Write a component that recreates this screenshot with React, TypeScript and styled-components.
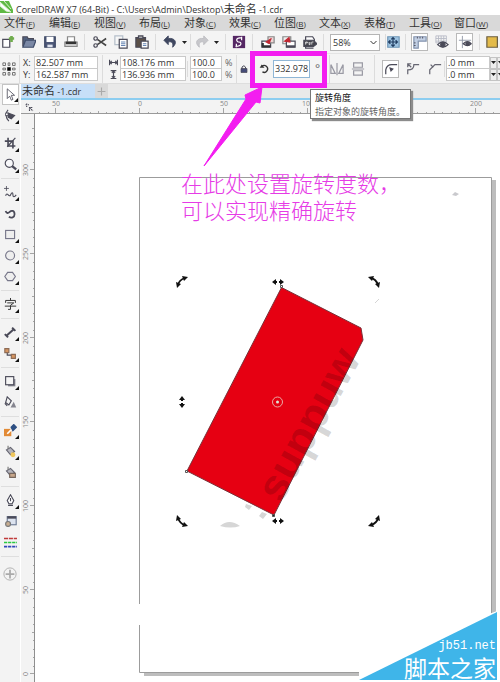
import React from "react";
import styled, { createGlobalStyle } from "styled-components";

const UI = '"Open Sans", "Noto Sans", "Noto Sans CJK SC", sans-serif';
const INK = "#4a4a58";
const MAGENTA = "#f31df0";

const GlobalStyle = createGlobalStyle`
  * { box-sizing: border-box; }
  body { margin: 0; background: #fff; font-family: ${UI}; color: #333; overflow: hidden; }
  button, input, select { font-family: inherit; color: inherit; margin: 0; padding: 0; border: 0; background: none; border-radius: 0; }
  svg { display: block; flex: none; }
`;

const Shell = styled.div`
  position: relative;
  display: flex;
  flex-direction: column;
  min-height: 100vh;
`;
const TitleBar = styled.header`
  display: flex;
  align-items: center;
  gap: 3px;
  height: 15px;
  font-size: 9px;
  white-space: nowrap;
  background: #fff;
`;
const Han = styled.span`
  font-size: 11px;
`;
const MenuBar = styled.nav`
  display: flex;
  height: 16px;
  padding-left: 4px;
  background: #d9d9d9;
`;
const MenuItem = styled.button`
  flex: none;
  width: 45px;
  text-align: left;
  font-size: 11px;
  line-height: 15px;
  white-space: nowrap;
`;
const Accel = styled.span`
  font-size: 8px;
`;
const ToolBar = styled.div`
  display: flex;
  align-items: center;
  height: 22px;
  padding-left: 1px;
  background: #f4f4f4;
  overflow: hidden;
`;
const Group = styled.div<{ $gap?: number }>`
  display: flex;
  align-items: center;
  flex: none;
  gap: ${(p) => p.$gap ?? 7}px;
`;
const Divider = styled.span<{ $before?: number; $after?: number; $tall?: boolean }>`
  flex: none;
  width: 1px;
  height: ${(p) => (p.$tall ? 28 : 16)}px;
  margin: 0 ${(p) => p.$after ?? 6}px 0 ${(p) => p.$before ?? 6}px;
  background: #dcdcdc;
`;
const IconButton = styled.button<{ $w?: number; $boxed?: boolean }>`
  display: flex;
  align-items: center;
  justify-content: center;
  flex: none;
  width: ${(p) => p.$w ?? 14}px;
  height: 18px;
  ${(p) => p.$boxed && "background: #fff; border: 1px solid #b9b9b9;"}
`;
const ZoomBox = styled.div`
  display: flex;
  position: relative;
  width: 64px;
  height: 17px;
`;
const ZoomSelect = styled.select`
  appearance: none;
  width: 100%;
  padding-left: 2px;
  border: 1px solid #b5b5b5;
  background: #fff;
  font-size: 9px;
`;
const Chevron = styled.svg`
  position: absolute;
  right: 3px;
  top: 6px;
  pointer-events: none;
`;
const PropertyBar = styled.div`
  display: flex;
  align-items: center;
  height: 31px;
  padding-left: 2px;
  background: #f4f4f4;
  border-top: 1px solid #e4e4e4;
  border-bottom: 1px solid #dedede;
  overflow: hidden;
`;
const FieldStack = styled.div<{ $w: number }>`
  display: flex;
  flex-direction: column;
  flex: none;
  width: ${(p) => p.$w}px;
`;
const FieldRow = styled.label`
  display: flex;
  align-items: center;
  height: 12px;
  font-size: 9px;
`;
const FieldName = styled.span`
  display: flex;
  flex: none;
  width: 11px;
`;
const Field = styled.input`
  flex: 1;
  min-width: 0;
  width: 100%;
  height: 13px;
  padding: 0 1px;
  border: 1px solid #c9c9c9;
  background: #fff;
  font-size: 9px;
  line-height: 11px;
`;
const Unit = styled.span`
  flex: none;
  width: 12px;
  padding-left: 3px;
  color: #666;
`;
const Spin = styled.button`
  display: flex;
  align-items: center;
  justify-content: center;
  width: 7px;
  height: 12px;
  border: 1px solid #c4c4c4;
  background: #eee;
`;
const AngleGroup = styled.div`
  display: flex;
  align-items: center;
  position: relative;
  z-index: 2;
  flex: none;
  width: 78px;
  height: 29px;
  padding-left: 8px;
  gap: 3px;
`;
const AngleField = styled(Field)`
  flex: none;
  width: 37px;
  height: 18px;
  border-color: #8fb6d6;
`;
const Degree = styled.span`
  padding-left: 2px;
  font-size: 12px;
  color: #666;
`;
const Workspace = styled.div`
  display: flex;
  flex: 1;
`;
const ToolBox = styled.aside`
  display: flex;
  flex-direction: column;
  align-items: center;
  flex: none;
  width: 20px;
  background: #f3f3f3;
`;
const Tool = styled.button<{ $active?: boolean; $tall?: boolean }>`
  display: flex;
  position: relative;
  align-items: center;
  justify-content: center;
  flex: none;
  width: 17px;
  height: ${(p) => (p.$tall ? 28 : 21)}px;
  ${(p) => p.$active && "background: #fff; border: 1px solid #c4c4c4;"}
`;
const Flyout = styled.span`
  position: absolute;
  right: 0;
  bottom: 2px;
  border-left: 4px solid transparent;
  border-bottom: 4px solid #111;
`;
const ToolDivider = styled.span`
  flex: none;
  width: 18px;
  height: 1px;
  margin: 3px 0;
  background: #dedede;
`;
const Document = styled.main`
  display: flex;
  flex-direction: column;
  flex: 1;
  min-width: 0;
  border-left: 1px solid #fff;
`;
const Tabs = styled.div`
  display: flex;
  height: 16px;
  background: #e9e9e9;
  border-bottom: 2px solid #8ccdf0;
`;
const Tab = styled.button`
  width: 74px;
  padding-left: 1px;
  text-align: left;
  font-size: 9px;
  line-height: 14px;
  white-space: nowrap;
  background: #c7dff8;
`;
const AddTab = styled.button`
  display: flex;
  align-items: center;
  justify-content: center;
  width: 13px;
  background: #d9d9d9;
`;
const TopRuler = styled.div`
  display: flex;
  height: 14px;
  background: #f3f3f3;
  border-bottom: 1px solid #9a9a9a;
  overflow: hidden;
`;
const Corner = styled.div`
  flex: none;
  width: 14px;
  padding: 3px 0 0 4px;
`;
const HScale = styled.div`
  display: flex;
  margin-left: -21px;
`;
const HSegment = styled.div`
  display: flex;
  flex-direction: column;
  align-items: center;
  justify-content: space-between;
  flex: none;
  width: 84px;
  font-size: 7px;
  line-height: 8px;
  color: #888;
`;
const RulerClip = styled.div`
  flex: 1;
  min-width: 0;
  overflow: hidden;
`;
const Body = styled.div`
  display: flex;
  flex: 1;
`;
const LeftRuler = styled.div`
  flex: none;
  width: 14px;
  background: #f3f3f3;
  border-right: 1px solid #8f8f8f;
  overflow: hidden;
  height: calc(100vh - 114px);
`;
const VScale = styled.div`
  display: flex;
  flex-direction: column;
  margin-top: 14px;
`;
const VSegment = styled.div`
  display: flex;
  align-items: center;
  justify-content: space-between;
  flex: none;
  height: 84px;
  padding-left: 1px;
  font-size: 7px;
  line-height: 8px;
  color: #888;
`;
const VLabel = styled.span`
  writing-mode: vertical-rl;
  transform: rotate(180deg);
`;
const Canvas = styled.section`
  position: relative;
  flex: 1;
  min-width: 0;
  overflow: hidden;
  background: #fff;
`;
const Artwork = styled.svg`
  position: absolute;
  left: 0;
  top: 0;
`;
const Note = styled.p`
  position: absolute;
  left: 146px;
  top: 55px;
  margin: 0;
  font: 300 22px/27px "Noto Sans CJK SC", sans-serif;
  color: #e63be6;
  white-space: nowrap;
`;
const Brand = styled.div`
  position: absolute;
  right: 4px;
  bottom: 0;
  text-align: right;
  color: #fff;
  font: 23px/30px "Noto Sans CJK SC", sans-serif;
  white-space: nowrap;
`;
const BrandUrl = styled.div`
  font: 12px/12px "Liberation Mono", monospace;
`;
const Callout = styled.svg`
  position: absolute;
  left: 200px;
  top: 51px;
  z-index: 3;
  pointer-events: none;
`;
const Tooltip = styled.div`
  position: absolute;
  z-index: 4;
  left: 310px;
  top: 89px;
  width: 101px;
  height: 30px;
  padding: 1px 4px;
  border: 1px solid #777;
  background: #fff;
  box-shadow: 2px 2px 1px #8c8c8c;
  font-size: 9px;
  line-height: 14px;
  white-space: nowrap;
  color: #666;
`;
const TipTitle = styled.strong`
  display: block;
  font-weight: 400;
  color: #111;
`;

type IconProps = { children: React.ReactNode; size?: number; stroke?: string };
const Icon = ({ children, size = 14, stroke = INK }: IconProps) => (
  <svg width={size} height={size} viewBox="0 0 16 16" fill="none" stroke={stroke} strokeWidth="1.4" aria-hidden="true">
    {children}
  </svg>
);
const Caret = () => (
  <svg width="5" height="3" viewBox="0 0 5 3" aria-hidden="true"><path d="M0 0h5L2.500 3z" fill="#222" /></svg>
);

const menus: [string, string][] = [
  ["文件", "F"], ["编辑", "E"], ["视图", "V"], ["布局", "L"], ["对象", "C"], ["效果", "C"],
  ["位图", "B"], ["文本", "X"], ["表格", "T"], ["工具", "O"], ["窗口", "W"],
];

const bucket = (
  <>
    <path d="M3 6l5-3 5 5-5 4z" fill="#b5b5bd" stroke="#666672" />
    <path d="M5 5V1" stroke="#777" />
  </>
);

type ToolSpec = { name: string; art: React.ReactNode; fly?: boolean };
const toolGroups: ToolSpec[][] = [
  [
    { name: "选择", fly: true, art: <path d="M4 1v12l3-3 2 5 2-1-2-5h4z" fill="#fff" strokeWidth="1" /> },
    { name: "形状", fly: true, art: <><path d="M5 1C1 5 2 11 6 15" /><path d="M5 5l8 3-4 4-4-2z" fill={INK} /><rect x="2" y="5" width="3" height="3" fill="#fff" strokeWidth="1" /></> },
  ],
  [
    { name: "裁剪", fly: true, art: <><path d="M5 1v10h9M1 5h10v9" strokeWidth="2" /><path d="M14 1L4 12" /></> },
    { name: "缩放", fly: true, art: <><circle cx="6.500" cy="6.500" r="5" fill="#f8f8fa" /><path d="M10 10l5 4" strokeWidth="3" /></> },
  ],
  [
    { name: "手绘", fly: true, art: <><path d="M3 0v6M0 3h6" strokeWidth="1" /><path d="M2 12c2-6 4 3 6-1s3-3 3 0 2 3 4 0" /></> },
    { name: "艺术笔", art: <path d="M2 5c1 3 3 3 5 1s6-2 6 3c0 4-4 5-7 3" strokeWidth="2.200" /> },
    { name: "矩形", fly: true, art: <rect x="2" y="3" width="11" height="10" fill="#eee" stroke="#77778a" /> },
    { name: "椭圆", fly: true, art: <circle cx="7.500" cy="8" r="5.500" fill="#eee" stroke="#77778a" /> },
    { name: "多边形", fly: true, art: <path d="M4.500 3h6l3.500 5-3.500 5h-6L1 8z" fill="#eee" stroke="#77778a" /> },
  ],
  [{ name: "文本", fly: true, art: <path d="M8 0v3M2 6V3h12v3M4 6h8l-4 3v5H5M1 10h14" stroke="#333" strokeWidth="1.200" /> }],
  [
    { name: "平行度量", fly: true, art: <><path d="M3 12L12 4" strokeWidth="2.500" /><path d="M1 10l4 4M10 2l4 4" strokeWidth="2.500" /></> },
    { name: "连接器", fly: true, art: <><path d="M4 4v6h7" /><path d="M1 2h5v5H1zM9 9h5v5H9z" fill="#d59561" stroke="#8d6b55" /></> },
  ],
  [
    { name: "阴影", fly: true, art: <><path d="M5 5h9v9H5z" fill="#888892" stroke="none" /><rect x="2" y="2" width="10" height="10" fill="#f5f5f5" /></> },
    { name: "透明度", art: <><path d="M4 1l5 5-3 5-4-3zM1 9l3 3" /><path d="M8 14l4-7 3 7z" fill="#85858f" stroke="none" /></> },
  ],
  [
    { name: "颜色滴管", fly: true, art: <><path d="M0 6h9v9H0z" fill="#e28b37" stroke="none" /><path d="M4 12l6-6" stroke="#fff" strokeWidth="2" /><path d="M9 4l3-3 3 3-4 4z" fill="#2d4f83" stroke="#2d4f83" strokeWidth="2" /></> },
    { name: "交互式填充", fly: true, art: <>{bucket}<circle cx="11" cy="12" r="3" fill="#f0c75c" stroke="none" /></> },
    { name: "智能填充", art: <>{bucket}<path d="M7 9h7v5H7z" fill="#c7a68a" stroke="#77675d" /></> },
  ],
  [
    { name: "轮廓笔", fly: true, art: <><path d="M8 1l4 7-2 4H6L4 8zM8 5v4M5 14h6" fill="#fff" /></> },
    { name: "编辑填充", art: <><rect x="4" y="2" width="11" height="10" fill="#dce3ef" stroke="#6d7a94" /><path d="M4 3h11" strokeWidth="3" /><circle cx="5" cy="11" r="3" fill="#c8ae91" stroke="#777" /></> },
    { name: "颜色样式", art: <><path d="M0 3h16" stroke="#c03a3a" strokeWidth="2" strokeDasharray="5 1" /><path d="M0 8h16" stroke="#29c840" strokeWidth="2" strokeDasharray="4 1" /><path d="M0 13h16" stroke="#3146b8" strokeWidth="2" strokeDasharray="4 1" /></> },
  ],
];

const widthMarks = ["50", "0", "50", "100", "150", "200"];
const heightMarks = ["300", "250", "200", "150", "100", "50", "0"];

const HTicks = () => (
  <svg width="84" height="5" viewBox="0 0 84 5" stroke="#a5a5a5" aria-hidden="true">
    {[0, 8, 17, 25, 34, 50, 59, 67, 76].map((x) => <path key={x} d={`M${x + 0.5} ${x ? 4 : 3}v2`} />)}
    <path d="M41.500 0v5" />
  </svg>
);
const VTicks = () => (
  <svg width="5" height="84" viewBox="0 0 5 84" stroke="#a5a5a5" aria-hidden="true">
    {[0, 8, 17, 25, 34, 50, 59, 67, 76].map((y) => <path key={y} d={`M${y ? 3 : 2} ${y + 0.5}h3`} />)}
    <path d="M0 41.500h5" />
  </svg>
);

const RotateHandle = ({ x, y, turn }: { x: number; y: number; turn: number }) => (
  <g transform={`translate(${x} ${y}) rotate(${turn})`}>
    <path d="M-4 3Q-3-2 3-4" fill="none" stroke="#111" strokeWidth="1.800" />
    <path d="M0-6l6 1-4 4zM-6 0l5 2-4 4z" fill="#111" />
  </g>
);
const SkewHandle = ({ x, y, turn = 0 }: { x: number; y: number; turn?: number }) => (
  <path transform={`translate(${x} ${y}) rotate(${turn})`} d="M-6 0l4-3v2h1v2h-1v2zM6 0l-4-3v2h-1v2h1v2z" fill="#111" />
);

const Drawing = () => (
  <Artwork width="465" height="568" viewBox="35 114 465 568" role="img" aria-label="旋转的红色矩形">
    <path d="M491 180h5v496H144v-4h347z" fill="#bdbdbd" />
    <path d="M139.500 672.500v-495h352v495z" fill="#fff" stroke="#9c9c9c" />
    <path d="M137 604h6v21h-6z" fill="#fff" />
    <path d="M452 195l3-3 4 2-3 2z" fill="#c9c9cd" />
    <path d="M375 303l4-4" stroke="#d5d5d5" />
    <path d="M220 526q9-8 20 0-9 3-20 0zM246 504l6 2-3 4-4-3zM262 512l5 2-4 5-4-3z" fill="#d6d6d6" />
    <path d="M281.500 287.500L361 328l2 12-89 175-87-44z" fill="#e60012" stroke="#7a3038" />
    <text
      transform="translate(281 504) rotate(-61)"
      fontFamily="Liberation Sans, sans-serif"
      fontWeight="700"
      fontSize="44"
      fillOpacity="0.160"
    >
      suppuw
    </text>
    <circle cx="277.500" cy="402" r="5" fill="none" stroke="#e9aaa5" />
    <circle cx="277.500" cy="402" r="1.500" fill="#d9e9d9" />
    <g fill="#fff" stroke="#555">
      <path d="M280.500 285.500h2v2h-2zM185.500 470.500h2v2h-2z" />
      <path d="M272.500 514.500h2v2h-2z" fill="#222" />
    </g>
    <RotateHandle x={182} y={282} turn={0} />
    <RotateHandle x={374} y={282} turn={90} />
    <RotateHandle x={374} y={521} turn={180} />
    <RotateHandle x={182} y={521} turn={270} />
    <SkewHandle x={278} y={282} />
    <SkewHandle x={278} y={521} />
    <SkewHandle x={182} y={402} turn={90} />
    <path d="M359 682v-20l138-51h3v71z" fill="#fff" />
    <path d="M359 680l138-68v68z" fill="#3fb5e9" />
  </Artwork>
);

const WidthGlyph = () => <Icon size={9}><path d="M1 3v10M15 3v10M2 8h12M5 5L2 8l3 3M11 5l3 3-3 3" strokeWidth="2" /></Icon>;
const HeightGlyph = () => <Icon size={9}><path d="M3 1h10M3 15h10M8 2v12M5 5l3-3 3 3M5 11l3 3 3-3" strokeWidth="2" /></Icon>;

export default function App() {
  return (
    <Shell>
      <GlobalStyle />
      <TitleBar>
        <svg width="13" height="14" viewBox="0 0 13 14" aria-hidden="true">
          <path d="M0 0h9l4 9v3H0z" fill="#5fb944" />
          <path d="M0 1l11 10-5-1L0 5zM4 0l7 8" fill="#fff" stroke="#d9efcf" />
        </svg>
        <span>CorelDRAW X7 (64-Bit) - C:\Users\Admin\Desktop\<Han>未命名</Han> -1.cdr</span>
      </TitleBar>
      <MenuBar aria-label="主菜单">
        {menus.map(([label, key]) => (
          <MenuItem key={label}>{label}<Accel>(<u>{key}</u>)</Accel></MenuItem>
        ))}
      </MenuBar>
      <ToolBar>
        <Group>
          <IconButton aria-label="新建"><Icon><path d="M2 5h8v9H2z" fill="#fff" /><path d="M12 1v7M9 4h6" stroke="#6fac4c" strokeWidth="3" /></Icon></IconButton>
          <IconButton aria-label="打开"><Icon><path d="M1 13V2h5l1 2h6v2" fill="#53627f" /><path d="M1 14L4 6h12l-3 8z" fill="#7b88a5" stroke="#3f4c6a" /></Icon></IconButton>
          <IconButton aria-label="保存"><Icon><path d="M2 2h12v12H2z" fill="#4d5878" stroke="#3d4764" /><path d="M4 2h8v6H4z" fill="#fff" stroke="none" /><path d="M5 11h6v3H5z" fill="#dfe3ee" stroke="none" /></Icon></IconButton>
          <IconButton aria-label="打印"><Icon><path d="M4 8V2h8v6" fill="#fff" stroke="#888" /><path d="M1 8h14v5H1z" fill="#e4e4e4" stroke="#888" /><path d="M2 9h12" stroke="#333" strokeWidth="3" /></Icon></IconButton>
        </Group>
        <Divider $after={8} />
        <Group>
          <IconButton aria-label="剪切"><Icon><path d="M5 5l10 7M5 11l10-7" stroke="#444" strokeWidth="1.800" /><circle cx="3" cy="4" r="2" /><circle cx="3" cy="12" r="2" /></Icon></IconButton>
          <IconButton aria-label="复制"><Icon><path d="M1 1h9v10H1z" fill="#f7f7f7" stroke="#b5bfca" /><path d="M6 5h9v10H6z" fill="#fff" /><path d="M8 8h5M8 10h5M8 12h5" stroke="#6685b4" /></Icon></IconButton>
          <IconButton aria-label="粘贴"><Icon><path d="M1 3h11v11H1z" fill="#5b5048" /><path d="M4 1h5v3H4z" fill="#aaa" /><path d="M7 7h8v8H7z" fill="#fff" /><path d="M9 10h4M9 12h4" stroke="#6685b4" /></Icon></IconButton>
        </Group>
        <Divider $after={7} />
        <Group $gap={4}>
          <IconButton aria-label="撤消"><Icon><path d="M6 1L1 6l5 5V8c4-1 6 1 5 6 6-5 3-11-5-10z" fill="#3f4760" stroke="#3f4760" strokeWidth="1" /></Icon></IconButton>
          <IconButton $w={6} aria-label="撤消列表"><Caret /></IconButton>
        </Group>
        <Divider $before={3} $after={4} />
        <Group $gap={4}>
          <IconButton aria-label="重做"><Icon><path d="M10 1l5 5-5 5V8c-4-1-6 1-5 6-6-5-3-11 5-10z" fill="#c7c7cb" stroke="#bcbcc0" strokeWidth="1" /></Icon></IconButton>
          <IconButton $w={6} aria-label="重做列表"><Caret /></IconButton>
        </Group>
        <Divider />
        <IconButton aria-label="搜索内容"><Icon><path d="M1 1h14v14H1z" fill="#552764" stroke="none" /><path d="M11 3C3 3 5 8 8 8s4 5-4 5M11 2v4M5 10v4" stroke="#fff" /></Icon></IconButton>
        <Divider $after={8} />
        <Group>
          <IconButton aria-label="导入"><Icon><path d="M1 7h10v7H1z" fill="#fff" /><path d="M1 13h10M2 9v4" stroke="#333" strokeWidth="2.500" /><path d="M8 2h7v7H8z" fill="#ecd8d8" stroke="#888" /><path d="M12 4L6 8l4 2" fill="#c12832" stroke="#c12832" /></Icon></IconButton>
          <IconButton aria-label="导出"><Icon><path d="M1 2h9v8H1z" fill="#eee" stroke="#888" /><path d="M5 7h10v7H5z" fill="#fff" /><path d="M5 13h10" strokeWidth="2.500" /><path d="M3 7l5-4 1 5z" fill="#c12832" stroke="#c12832" /></Icon></IconButton>
          <IconButton aria-label="发布为PDF"><Icon><path d="M3 6V2h8l2 3v2M3 12v3h9" fill="#fff" /><path d="M1 6h11l4 4-4 3H1z" fill="#44444c" /><path d="M3 11V8h2v1H3M7 8v3h1V8M10 11V8h2" stroke="#fff" strokeWidth=".8" /></Icon></IconButton>
        </Group>
        <Divider />
        <ZoomBox>
          <ZoomSelect aria-label="缩放级别" defaultValue="58%"><option>58%</option><option>100%</option></ZoomSelect>
          <Chevron width="7" height="5" viewBox="0 0 7 5" fill="none" stroke="#333"><path d="M.5 1l3 3 3-3" /></Chevron>
        </ZoomBox>
        <Group $gap={0}>
          <Divider $before={5} $after={0} />
          <IconButton aria-label="全屏预览"><Icon><path d="M2 2h13v12H2z" fill="#9fc4e2" stroke="#6f97b8" /><path d="M8 3v10M3 8h10M6 5l2-2 2 2M6 11l2 2 2-2M5 6L3 8l2 2M11 6l2 2-2 2" stroke="#203d61" /></Icon></IconButton>
          <Divider $before={5} $after={5} />
        </Group>
        <Group>
          <IconButton $w={17} $boxed aria-label="显示标尺"><Icon><path d="M1 2h14v5H6v8H1z" fill="#c3d0e4" stroke="#8494ae" /><path d="M5 2v2M8 2v2M11 2v2M1 9h2M1 12h2" strokeWidth="1" /></Icon></IconButton>
          <IconButton aria-label="显示网格"><Icon><path d="M1 1h12v8H1zM4 1v9M7 1v9M10 1v9M1 4h12M1 7h12" stroke="#b7bac6" strokeWidth="1" /><path d="M3 11q6-6 12 0-6 6-12 0z" fill="#fff" /><circle cx="9" cy="11" r="2.500" fill={INK} /></Icon></IconButton>
          <IconButton $w={17} $boxed aria-label="显示辅助线"><Icon><path d="M5 1v14M1 6h14" stroke="#8c92a2" strokeWidth="1" /><path d="M6 10q5-5 9 0-4 4-9 0z" fill="#fff" /><circle cx="11" cy="10" r="2" fill={INK} /></Icon></IconButton>
        </Group>
        <Divider $after={6} />
        <IconButton aria-label="对齐"><Icon><path d="M1 2h12v12H1z" fill="#e4bb4a" stroke="#6b5f43" /></Icon></IconButton>
      </ToolBar>
      <PropertyBar>
        <Icon stroke="#666"><path d="M1 1h3v3H1zM7 1h2v3H7zM12 1h3v3h-3zM1 7h3v2H1zM12 7h3v2h-3zM1 12h3v3H1zM7 12h2v3H7zM12 12h3v3h-3z" strokeWidth="1" /><path d="M6 6h4v4H6z" fill="#000" stroke="none" /></Icon>
        <Divider $tall $before={3} $after={3} />
        <FieldStack $w={75}>
          <FieldRow><FieldName>X:</FieldName><Field defaultValue="82.507 mm" /></FieldRow>
          <FieldRow><FieldName>Y:</FieldName><Field defaultValue="162.587 mm" /></FieldRow>
        </FieldStack>
        <Divider $tall $before={4} $after={6} />
        <FieldStack $w={77}>
          <FieldRow><FieldName><WidthGlyph /></FieldName><Field aria-label="宽度" defaultValue="108.176 mm" /></FieldRow>
          <FieldRow><FieldName><HeightGlyph /></FieldName><Field aria-label="高度" defaultValue="136.936 mm" /></FieldRow>
        </FieldStack>
        <Divider $before={1} $after={2} />
        <FieldStack $w={44}>
          <FieldRow><Field aria-label="水平缩放" defaultValue="100.0" /><Unit>%</Unit></FieldRow>
          <FieldRow><Field aria-label="垂直缩放" defaultValue="100.0" /><Unit>%</Unit></FieldRow>
        </FieldStack>
        <Divider $tall $before={2} $after={0} />
        <IconButton $w={14} aria-label="锁定比率"><Icon size={8}><path d="M4 8V4q4-5 7 0v4" strokeWidth="2" /><path d="M2 7h12v8H2z" fill="#454b78" /></Icon></IconButton>
        <AngleGroup>
          <Icon size={11}><path d="M4 5a5 5 0 1 1 1 8" stroke="#333" strokeWidth="2" /><path d="M1 7l3-5 4 5z" fill="#333" stroke="none" /></Icon>
          <AngleField aria-label="旋转角度" defaultValue="332.978" />
          <Degree>°</Degree>
        </AngleGroup>
        <Group $gap={7}>
          <Divider $tall $before={0} $after={-7} />
          <IconButton aria-label="水平镜像"><Icon stroke="#9a9aa4"><path d="M1 3v10h5zM15 3v10h-5zM8 1v14" /></Icon></IconButton>
          <IconButton aria-label="垂直镜像"><Icon stroke="#9a9aa4"><path d="M3 1h10v5H3zM3 15h10v-5H3zM1 8h14" /></Icon></IconButton>
        </Group>
        <Divider $tall $before={9} $after={7} />
        <Group $gap={6}>
          <IconButton $w={17} $boxed aria-label="圆角"><Icon><path d="M2 14V9q1-6 7-6h6" /><path d="M7 7l3 1-2 2z" fill={INK} /></Icon></IconButton>
          <IconButton $w={16} aria-label="扇形角"><Icon stroke="#666672"><path d="M2 14V9q7 0 7-6h6" /><path d="M2 2l4 4M2 6V2h4" /></Icon></IconButton>
          <IconButton $w={16} aria-label="倒棱角"><Icon stroke="#666672"><path d="M2 14V9l6-6h7" /><path d="M3 3l3 3" /></Icon></IconButton>
        </Group>
        <Divider $before={1} $after={1} />
        <FieldStack $w={51}>
          <FieldRow><Field aria-label="左上角半径" defaultValue=".0 mm" /><Spin aria-label="调整左上角"><Caret /></Spin></FieldRow>
          <FieldRow><Field aria-label="左下角半径" defaultValue=".0 mm" /><Spin aria-label="调整左下角"><Caret /></Spin></FieldRow>
        </FieldStack>
        <FieldStack $w={7}>
          <Spin aria-label="调整右上角"><Caret /></Spin>
          <Spin aria-label="调整右下角"><Caret /></Spin>
        </FieldStack>
      </PropertyBar>
      <Workspace>
        <ToolBox>
          {toolGroups.map((group, g) => (
            <React.Fragment key={g}>
              {group.map((t, i) => (
                <Tool key={t.name} $active={g === 0 && i === 0} aria-label={t.name}>
                  <Icon size={13}>{t.art}</Icon>
                  {t.fly && <Flyout />}
                </Tool>
              ))}
              <ToolDivider />
            </React.Fragment>
          ))}
          <Tool $tall aria-label="自定义"><Icon stroke="#aaa"><circle cx="8" cy="8" r="7" strokeWidth="1" /><path d="M8 3v10M3 8h10" strokeWidth="2" /></Icon></Tool>
        </ToolBox>
        <Document>
          <Tabs>
            <Tab><Han>未命名</Han> -1.cdr</Tab>
            <AddTab aria-label="新建文档"><Icon size={9} stroke="#aaa"><path d="M8 1v14M1 8h14" strokeWidth="2" /></Icon></AddTab>
          </Tabs>
          <TopRuler>
            <Corner><Icon size={9}><path d="M1 3h2M5 3h2M3 1v2M3 5v2M8 8l6 6M8 14V8h6" strokeWidth="2" strokeDasharray="3 1" /></Icon></Corner>
            <RulerClip>
              <HScale>
                {widthMarks.map((m, i) => <HSegment key={i}>{m}<HTicks /></HSegment>)}
              </HScale>
            </RulerClip>
          </TopRuler>
          <Body>
            <LeftRuler>
              <VScale>
                {heightMarks.map((m) => <VSegment key={m}><VLabel>{m}</VLabel><VTicks /></VSegment>)}
              </VScale>
            </LeftRuler>
            <Canvas>
              <Drawing />
              <Note>在此处设置旋转度数，<br />可以实现精确旋转</Note>
              <Brand><BrandUrl>jb51.net</BrandUrl>脚本之家</Brand>
            </Canvas>
          </Body>
        </Document>
      </Workspace>
      <Callout width="130" height="117" viewBox="200 51 130 117" aria-hidden="true">
        <path d="M252.500 53.500h72v32h-72z" fill="none" stroke={MAGENTA} strokeWidth="5" />
        <path d="M204 166l42-67-1-4 17-8-2 16-4-1z" fill={MAGENTA} stroke={MAGENTA} />
      </Callout>
      <Tooltip role="tooltip"><TipTitle>旋转角度</TipTitle>指定对象的旋转角度。</Tooltip>
    </Shell>
  );
}
